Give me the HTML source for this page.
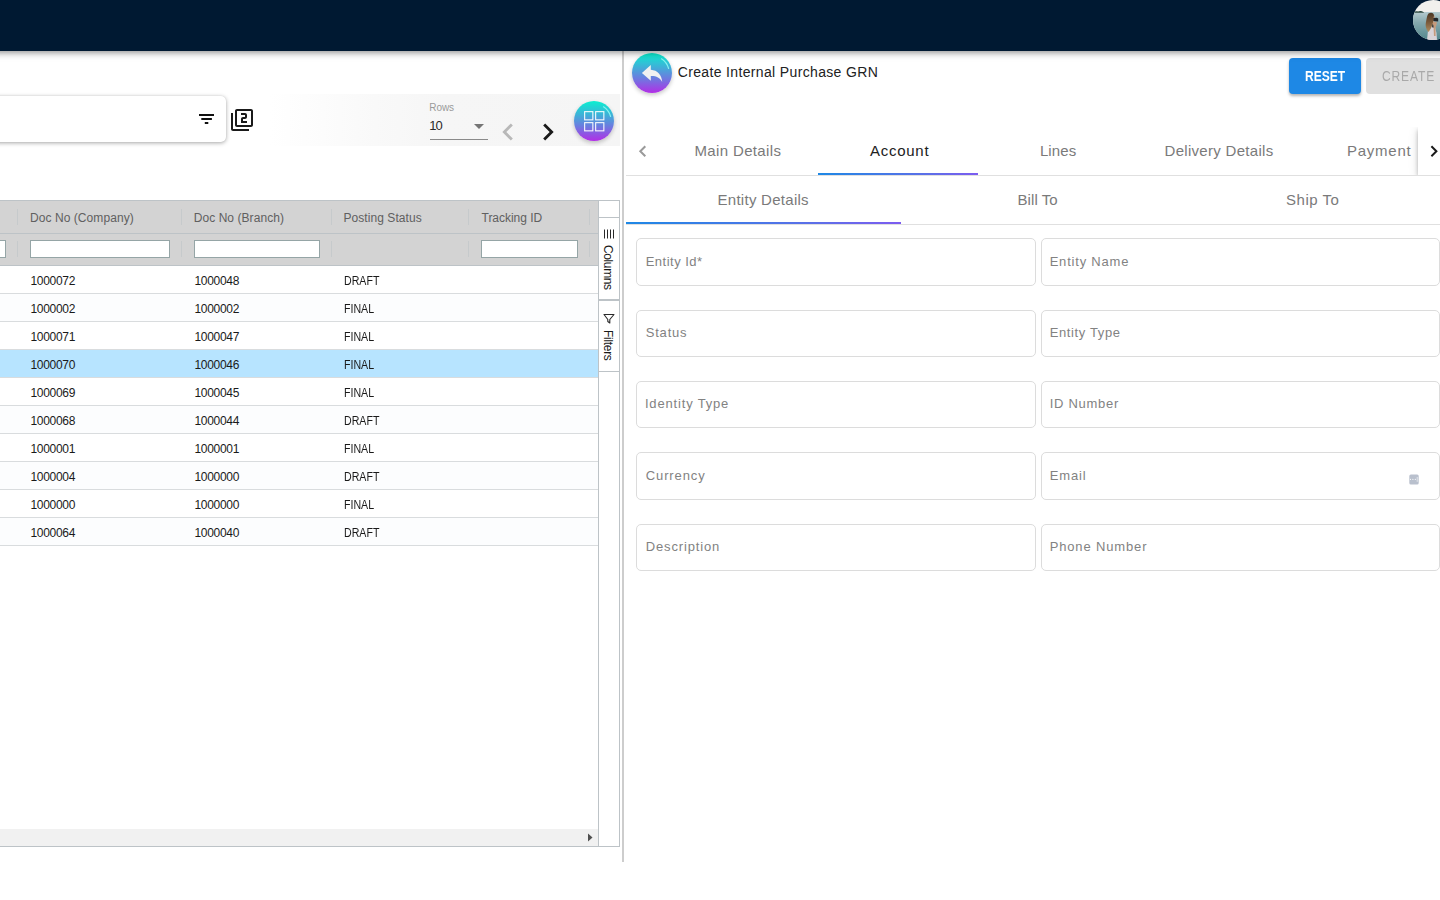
<!DOCTYPE html>
<html lang="en">
<head>
<meta charset="utf-8">
<title>Create Internal Purchase GRN</title>
<style>
*{box-sizing:border-box;margin:0;padding:0}
html,body{width:1440px;height:900px;overflow:hidden;background:#fff}
body{position:relative;font-family:"Liberation Sans",sans-serif;color:#212121}
.abs{position:absolute}
.t{position:absolute;white-space:nowrap;line-height:1}
/* top bar */
#topbar{left:-30px;top:0;width:1500px;height:51px;background:#001932;box-shadow:0 2px 4px -1px rgba(0,0,0,.2),0 4px 5px 0 rgba(0,0,0,.14),0 1px 10px 0 rgba(0,0,0,.12)}
#avatar{left:1413px;top:0;width:40px;height:40px;border-radius:50%;overflow:hidden;background:#7d959b}
/* left toolbar */
#band{left:270px;top:94px;width:350px;height:52px;background:linear-gradient(90deg,#ffffff 0,#f9f9f9 30%,#f6f6f6 50%,#f5f5f5 100%)}
#search{left:-20px;top:95.5px;width:246px;height:46.5px;background:#fff;border-radius:5px;box-shadow:0 1px 4px rgba(0,0,0,.34),0 0 1px rgba(0,0,0,.12)}
/* grid */
#grid{left:-2px;top:200px;width:622px;height:647px;border:1px solid #bdc3c7;background:#fff}
#ghead{left:0;top:201px;width:598px;height:65px;background:#d3d3d3;border-bottom:1px solid #bdc3c7}
#ghead2{left:0;top:233px;width:598px;height:1px;background:#bdc3c7}
.sep{position:absolute;width:1px;height:16px;background:#c6cacc}
.fin{position:absolute;height:18px;top:240px;background:#fff;border:1px solid #95a5a6}
.row{position:absolute;left:0;width:598px;height:28px;border-bottom:1px solid #d9dcde;background:#fff}
.row.odd{background:#fcfdfe}
.row.sel{background:#b7e4ff}
.c{position:absolute;top:9px;letter-spacing:-.3px;font-size:12px;line-height:12px;white-space:nowrap;color:#1a1a1a}
.c1{left:30.5px}.c2{left:194.5px}.c3{left:344px;letter-spacing:0;transform:scaleX(.885);transform-origin:0 0}
.h{position:absolute;top:212px;font-size:12px;line-height:12px;white-space:nowrap;color:#606060}
#side{left:598px;top:201px;width:21px;height:645px;border-left:1px solid #bdc3c7;background:#fff}
.sbtn{position:absolute;left:599px;width:20px;border-top:1px solid #bdc3c7;border-bottom:1px solid #bdc3c7;background:#fff}
.vt{position:absolute;white-space:nowrap;font-size:12px;line-height:12px;color:#1a1a1a;transform-origin:0 0;transform:rotate(90deg)}
#hscroll{left:0;top:829px;width:598px;height:17px;background:#f1f1f1}
/* right panel */
#divider{left:622px;top:51px;width:2px;height:811px;background:#cdcdcd}
.fab{position:absolute;width:40px;height:40px;border-radius:50%;background:linear-gradient(180deg,#0af0d0 0%,#3fb0d8 35%,#6f78e0 65%,#b22ee6 100%);box-shadow:0 2px 4px rgba(0,0,0,.22)}
#reset{left:1289px;top:58px;width:72px;height:36px;border-radius:4px;background:#1e88e5;box-shadow:0 2px 3px rgba(0,0,0,.3)}
#create{left:1366px;top:58px;width:90px;height:36px;border-radius:4px;background:#e0e0e0}
.line{position:absolute;height:1px;background:#e0e0e0}
.ink{position:absolute;height:2px;background:linear-gradient(90deg,#1e88e5 0%,#5e6ee8 70%,#7c5cf0 100%)}
.tab{position:absolute;white-space:nowrap;line-height:1;font-size:15px;color:#7a7a7a}
.fld{position:absolute;width:400px;height:48px;border:1px solid #dcdcdc;border-radius:5px;background:#fff}
.lbl{position:absolute;white-space:nowrap;line-height:1;font-size:13px;color:#828282}
</style>
</head>
<body>

<!-- ===== left: toolbar ===== -->
<div id="band" class="abs"></div>
<div id="search" class="abs"></div>
<!-- filter_list icon -->
<svg class="abs" style="left:196px;top:110px" width="22" height="16" viewBox="0 0 22 16"><path fill="#111" d="M3 4h15v2H3zM5.3 8h10.600v2H5.300zM8.8 12h3.500v2H8.800z"/></svg>
<!-- filter_2 icon -->
<svg class="abs" style="left:230px;top:108px" width="24" height="24" viewBox="0 0 24 24"><path fill="#1a1a1a" d="M3 5H1v16c0 1.1.9 2 2 2h16v-2H3V5zm18-4H7c-1.1 0-2 .9-2 2v14c0 1.1.9 2 2 2h14c1.1 0 2-.9 2-2V3c0-1.1-.9-2-2-2zm0 16H7V3h14v14zm-4-4h-4v-2h2c1.1 0 2-.89 2-2V7c0-1.11-.9-2-2-2h-4v2h4v2h-2c-1.1 0-2 .89-2 2v4h6v-2z"/></svg>
<!-- rows select -->
<span class="t" id="rowsLbl" style="left:429.36px;top:102.5px;font-size:10px;color:#9a9a9a;letter-spacing:-0.12px">Rows</span>
<span class="t" id="rowsVal" style="left:429.36px;top:119px;font-size:13px;color:#2a2a2a;letter-spacing:-1.1px">10</span>
<svg class="abs" style="left:467px;top:114px" width="24" height="24" viewBox="0 0 24 24"><path fill="#757575" d="M7 10l5 5 5-5z"/></svg>
<div class="abs" style="left:430px;top:139px;width:58px;height:1px;background:#8a8a8a"></div>
<!-- chevrons -->
<svg class="abs" style="left:491px;top:115px" width="34" height="34" viewBox="0 0 24 24"><path fill="#b8b8b8" d="M15.41 7.41L14 6l-6 6 6 6 1.41-1.41L10.83 12z"/></svg>
<svg class="abs" style="left:530.6px;top:115px" width="34" height="34" viewBox="0 0 24 24"><path fill="#1a1a1a" d="M10 6L8.59 7.41 13.17 12l-4.58 4.59L10 18l6-6z"/></svg>
<!-- grid FAB -->
<div class="fab" style="left:574px;top:101px"></div>
<svg class="abs" style="left:574px;top:101px" width="40" height="40" viewBox="0 0 40 40">
 <g fill="none" stroke="#fff" stroke-width="1.1" opacity=".95">
  <rect x="10.65" y="10.65" width="8.2" height="8.2"/><rect x="21.65" y="10.65" width="8.2" height="8.2"/>
  <rect x="10.65" y="21.65" width="8.2" height="8.2"/><rect x="21.65" y="21.65" width="8.2" height="8.2"/>
 </g>
 <path d="M29.5 5.8 A17 17 0 0 1 36.6 15.5" fill="none" stroke="#8ff8f2" stroke-width="1.2" stroke-linecap="round" opacity=".9"/>
</svg>

<!-- ===== left: grid ===== -->
<div id="grid" class="abs"></div>
<div id="ghead" class="abs"></div>
<div id="ghead2" class="abs"></div>
<!-- header cells -->
<span class="h" id="h1" style="left:29.90px;letter-spacing:0.08px">Doc No (Company)</span>
<span class="h" id="h2" style="left:193.72px;letter-spacing:0.06px">Doc No (Branch)</span>
<span class="h" id="h3" style="left:343.46px;letter-spacing:0.07px">Posting Status</span>
<span class="h" id="h4" style="left:481.54px;letter-spacing:-0.03px">Tracking ID</span>
<div class="sep" style="left:17px;top:209px"></div>
<div class="sep" style="left:17px;top:241px"></div>
<div class="sep" style="left:181px;top:209px"></div>
<div class="sep" style="left:181px;top:241px"></div>
<div class="sep" style="left:331px;top:209px"></div>
<div class="sep" style="left:331px;top:241px"></div>
<div class="sep" style="left:468px;top:209px"></div>
<div class="sep" style="left:468px;top:241px"></div>
<div class="sep" style="left:589px;top:209px"></div>
<div class="sep" style="left:589px;top:241px"></div>
<div class="fin" style="left:-20px;width:26px"></div>
<div class="fin" style="left:30px;width:140px"></div>
<div class="fin" style="left:194px;width:126px"></div>
<div class="fin" style="left:481px;width:97px"></div>
<!-- rows -->
<div class="row" style="top:266px"><span class="c c1">1000072</span><span class="c c2">1000048</span><span class="c c3">DRAFT</span></div>
<div class="row odd" style="top:294px"><span class="c c1">1000002</span><span class="c c2">1000002</span><span class="c c3">FINAL</span></div>
<div class="row" style="top:322px"><span class="c c1">1000071</span><span class="c c2">1000047</span><span class="c c3">FINAL</span></div>
<div class="row odd sel" style="top:350px"><span class="c c1">1000070</span><span class="c c2">1000046</span><span class="c c3">FINAL</span></div>
<div class="row" style="top:378px"><span class="c c1">1000069</span><span class="c c2">1000045</span><span class="c c3">FINAL</span></div>
<div class="row odd" style="top:406px"><span class="c c1">1000068</span><span class="c c2">1000044</span><span class="c c3">DRAFT</span></div>
<div class="row" style="top:434px"><span class="c c1">1000001</span><span class="c c2">1000001</span><span class="c c3">FINAL</span></div>
<div class="row odd" style="top:462px"><span class="c c1">1000004</span><span class="c c2">1000000</span><span class="c c3">DRAFT</span></div>
<div class="row" style="top:490px"><span class="c c1">1000000</span><span class="c c2">1000000</span><span class="c c3">FINAL</span></div>
<div class="row odd" style="top:518px"><span class="c c1">1000064</span><span class="c c2">1000040</span><span class="c c3">DRAFT</span></div>
<!-- side bar -->
<div id="side" class="abs"></div>
<div class="sbtn" style="top:217px;height:83px"></div>
<div class="sbtn" style="top:300px;height:72px"></div>
<svg class="abs" style="left:603px;top:229px" width="12" height="10" viewBox="0 0 12 10"><path fill="none" stroke="#2a2a2a" stroke-width="1" d="M1.5 .5v9M4.5 .5v9M7.5 .5v9M10.5 .5v9"/></svg>
<span class="vt" id="vtCols" style="left:614px;top:245px;letter-spacing:-.38px">Columns</span>
<svg class="abs" style="left:603px;top:313px" width="12" height="11" viewBox="0 0 12 11"><path fill="none" stroke="#2a2a2a" stroke-width="1.1" stroke-linejoin="round" d="M1 1.5H11L6.8 6.5V10L4.8 8.5V6.5Z"/></svg>
<span class="vt" id="vtFil" style="left:614px;top:330px;letter-spacing:-.3px">Filters</span>
<!-- horizontal scrollbar -->
<div id="hscroll" class="abs"></div>
<svg class="abs" style="left:586px;top:833px" width="8" height="9" viewBox="0 0 8 9"><path fill="#505050" d="M2 .5L6.5 4.5 2 8.500z"/></svg>

<!-- ===== right panel ===== -->
<div id="divider" class="abs"></div>
<!-- back FAB -->
<div class="fab" style="left:632px;top:53px"></div>
<svg class="abs" style="left:632px;top:53px" width="40" height="40" viewBox="0 0 40 40">
 <path fill="#f1f1f1" d="M18.8 12 L9.9 19.9 L18.8 27.8 V23 C24.2 22.8 27.9 24.7 30.2 29 C29.8 21.8 25.6 17.2 18.8 16.7 Z"/>
 <path d="M29.5 5.8 A17 17 0 0 1 36.6 15.5" fill="none" stroke="#8ff8f2" stroke-width="1.2" stroke-linecap="round" opacity=".9"/>
</svg>
<span class="t" id="title" style="left:677.72px;top:65px;font-size:14px;color:#212121;letter-spacing:0.35px">Create Internal Purchase GRN</span>
<!-- buttons -->
<div id="reset" class="abs"></div>
<span class="t" id="resetT" style="left:1304.6px;top:69px;font-size:14.5px;font-weight:bold;color:#fff;transform:scaleX(.83);transform-origin:0 0">RESET</span>
<div id="create" class="abs"></div>
<span class="t" id="createT" style="left:1381.6px;top:69px;font-size:14px;letter-spacing:1px;color:#a9a9a9;transform:scaleX(.86);transform-origin:0 0">CREATE</span>
<!-- main tabs -->
<div class="line" style="left:626px;top:175px;width:830px"></div>
<div class="ink" style="left:818px;top:173px;width:160px"></div>
<svg class="abs" style="left:634px;top:141px" width="16" height="20" viewBox="0 0 16 20"><path fill="none" stroke="#9a9a9a" stroke-width="2" stroke-linejoin="miter" d="M11.3 5.2L6.3 10.2 11.3 15.2"/></svg>
<span class="tab" id="tab1" style="left:694.46px;top:143px;letter-spacing:0.36px">Main Details</span>
<span class="tab" id="tab2" style="left:870.00px;top:143px;color:#212121;letter-spacing:0.73px">Account</span>
<span class="tab" id="tab3" style="left:1039.92px;top:143px;letter-spacing:0.09px">Lines</span>
<span class="tab" id="tab4" style="left:1164.54px;top:143px;letter-spacing:0.30px">Delivery Details</span>
<span class="tab" id="tab5" style="left:1347.00px;top:143px;letter-spacing:0.74px">Payment</span>
<div class="abs" style="left:1380px;top:127px;width:80px;height:48px;overflow:hidden"><div class="abs" style="left:38px;top:0;width:42px;height:48px;background:#fff;box-shadow:0 2px 4px -1px rgba(0,0,0,.2),0 4px 5px 0 rgba(0,0,0,.14),0 1px 10px 0 rgba(0,0,0,.12)"></div></div>
<svg class="abs" style="left:1426px;top:141px" width="16" height="20" viewBox="0 0 16 20"><path fill="none" stroke="#1a1a1a" stroke-width="2" stroke-linejoin="miter" d="M5.4 5.2L10.4 10.2 5.4 15.2"/></svg>
<!-- sub tabs -->
<div class="line" style="left:626px;top:224px;width:830px"></div>
<div class="ink" style="left:626px;top:222px;width:274.7px"></div>
<span class="tab" id="st1" style="left:717.55px;top:192px;letter-spacing:0.27px">Entity Details</span>
<span class="tab" id="st2" style="left:1017.55px;top:192px;letter-spacing:0.07px">Bill To</span>
<span class="tab" id="st3" style="left:1286.10px;top:192px;letter-spacing:0.51px">Ship To</span>
<!-- fields -->
<div class="fld" style="left:636px;top:238px;height:48px"></div><span class="lbl" id="l0a" style="left:645.72px;top:255px;letter-spacing:0.48px">Entity Id*</span>
<div class="fld" style="left:1041px;top:238px;height:48px;width:399px"></div><span class="lbl" id="l0b" style="left:1049.64px;top:255px;letter-spacing:0.80px">Entity Name</span>
<div class="fld" style="left:636px;top:310px;height:47px"></div><span class="lbl" id="l1a" style="left:645.72px;top:326px;letter-spacing:0.80px">Status</span>
<div class="fld" style="left:1041px;top:310px;height:47px;width:399px"></div><span class="lbl" id="l1b" style="left:1049.64px;top:326px;letter-spacing:0.64px">Entity Type</span>
<div class="fld" style="left:636px;top:381px;height:47px"></div><span class="lbl" id="l2a" style="left:644.92px;top:397px;letter-spacing:0.83px">Identity Type</span>
<div class="fld" style="left:1041px;top:381px;height:47px;width:399px"></div><span class="lbl" id="l2b" style="left:1049.64px;top:397px;letter-spacing:0.72px">ID Number</span>
<div class="fld" style="left:636px;top:452px;height:48px"></div><span class="lbl" id="l3a" style="left:645.72px;top:469px;letter-spacing:0.90px">Currency</span>
<div class="fld" style="left:1041px;top:452px;height:48px;width:399px"></div><span class="lbl" id="l3b" style="left:1049.64px;top:469px;letter-spacing:0.88px">Email</span>
<div class="fld" style="left:636px;top:524px;height:47px"></div><span class="lbl" id="l4a" style="left:645.72px;top:540px;letter-spacing:0.86px">Description</span>
<div class="fld" style="left:1041px;top:524px;height:47px;width:399px"></div><span class="lbl" id="l4b" style="left:1049.64px;top:540px;letter-spacing:0.86px">Phone Number</span>
<svg class="abs" style="left:1409px;top:474px" width="10" height="11" viewBox="0 0 10 11"><rect x=".3" y=".4" width="9.4" height="10.1" rx="1.6" fill="#b9c0cd"/><circle cx="1.5" cy="5.3" r=".6" fill="#fff"/><circle cx="3.9" cy="5.3" r=".6" fill="#fff"/><circle cx="6.3" cy="5.3" r=".6" fill="#fff"/><rect x="7.8" y="3" width=".7" height="4.8" fill="#f4f5f8"/></svg>

<!-- ===== top bar ===== -->
<div id="topbar" class="abs"></div>
<svg id="avatar" class="abs" style="left:1413px;top:0;background:none;border-radius:0" width="40" height="40" viewBox="0 0 40 40">
 <defs>
  <clipPath id="avc"><circle cx="20" cy="20" r="20"/></clipPath>
  <linearGradient id="sea" x1="0" y1="0" x2="0" y2="1"><stop offset="0" stop-color="#b4cace"/><stop offset=".35" stop-color="#86a9ae"/><stop offset="1" stop-color="#4b8288"/></linearGradient>
  <linearGradient id="hair" x1="0" y1="0" x2="0" y2="1"><stop offset="0" stop-color="#4a3624"/><stop offset=".5" stop-color="#7a5a3a"/><stop offset="1" stop-color="#b08e62"/></linearGradient>
  <filter id="avb" x="-10%" y="-10%" width="120%" height="120%"><feGaussianBlur stdDeviation=".45"/></filter>
 </defs>
 <g clip-path="url(#avc)">
  <rect width="40" height="40" fill="#f1f0ed"/>
  <g filter="url(#avb)">
   <rect x="-2" y="12" width="44" height="30" fill="url(#sea)"/>
   <path d="M1 12.3 C2.5 10.8 4 11 5 11.5 C6.5 10.6 8.5 10.6 11 12.4 L11 12.8 L1 12.800Z" fill="#2f4a42"/>
   <!-- dress -->
   <path d="M15.5 26 C17 24.5 20 25 22 27 L23.5 33 L24 40 L14 40 Z" fill="#d9d4d8"/>
   <!-- arm / face skin -->
   <path d="M19.8 15 C21.5 14.5 22 16 21.5 18 L20.8 22 L23.5 21.5 C24.5 23 23 26 22.5 28 L22.6 36 L21 36 L20.5 27 L19 24 Z" fill="#c49a7c"/>
   <!-- hair -->
   <path d="M15.5 13.5 C18 11.8 21 12.8 21 15.5 C20 19 20.5 21 19.5 24 C19 27 17.5 29 15.5 32 C13.5 30 12 26 13 22 C13.8 18 14 15.5 15.5 13.500Z" fill="url(#hair)"/>
   <!-- camera -->
   <path d="M20.3 18 L23.8 17.7 L25.2 18.6 L25.2 21.6 L22.5 21.2 L20.3 21Z" fill="#23282b"/>
   <path d="M19.5 24 C20.5 25 20.8 26.5 20.3 28 L19 27Z" fill="#2d3030"/>
  </g>
 </g>
</svg>

</body>
</html>
